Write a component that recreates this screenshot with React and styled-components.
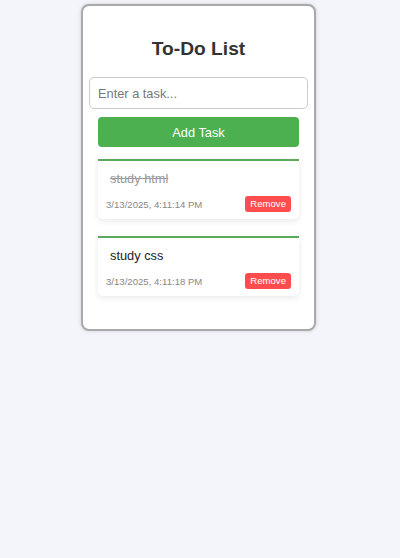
import React, { useState } from 'react';
import styled, { createGlobalStyle } from 'styled-components';

const GlobalStyle = createGlobalStyle`
  html, body {
    margin: 0;
    padding: 0;
    background: #f4f5fb;
    font-family: "Liberation Sans", Arial, sans-serif;
  }
  body {
    min-height: 558px;
  }
`;

const Page = styled.div`
  padding-right: 3px;
`;

const Card = styled.div`
  width: 219px;
  margin: 4px auto 0;
  padding: 16px 6px 33px;
  box-sizing: content-box;
  background: #fff;
  border: 2px solid #a9a9a9;
  border-radius: 8px;
  box-shadow: 0 0 4px rgba(0, 0, 0, 0.15);
  display: flex;
  flex-direction: column;
`;

const Title = styled.h2`
  margin: 16px 0 17px;
  font-size: 19.2px;
  line-height: 22px;
  font-weight: bold;
  color: #333;
  text-align: center;
`;

const TaskInput = styled.input`
  height: 32px;
  box-sizing: border-box;
  padding: 0 8px;
  border: 1px solid #ccc;
  border-radius: 5px;
  font-family: inherit;
  font-size: 12.8px;
  color: #333;
  outline: none;

  &::placeholder {
    color: #777;
  }
`;

const AddButton = styled.button`
  margin: 8px 9px 0;
  height: 30px;
  border: none;
  border-radius: 4px;
  background: #4caf50;
  color: #fff;
  font-family: inherit;
  font-size: 12.8px;
  cursor: pointer;
`;

const List = styled.ul`
  list-style: none;
  margin: 12px 9px 0;
  padding: 0;
  display: flex;
  flex-direction: column;
  gap: 17px;
`;

const Item = styled.li`
  height: 60px;
  box-sizing: border-box;
  padding: 10px 8px 7px;
  background: #fff;
  border-top: 2px solid #5aa95c;
  border-radius: 0 0 5px 5px;
  box-shadow: 0 2px 6px rgba(0, 0, 0, 0.09);
  display: flex;
  flex-direction: column;
  justify-content: space-between;
`;

const TaskText = styled.span`
  padding-left: 4px;
  font-size: 12.8px;
  line-height: 16px;
  color: ${(p) => (p.$done ? '#999' : '#222')};
  text-decoration: ${(p) => (p.$done ? 'line-through' : 'none')};
  cursor: pointer;
`;

const Meta = styled.div`
  display: flex;
  align-items: center;
  justify-content: space-between;
`;

const Stamp = styled.span`
  font-size: 9.6px;
  color: #888;
`;

const RemoveButton = styled.button`
  height: 16px;
  padding: 0 5px;
  border: none;
  border-radius: 3px;
  background: #ff4d4f;
  color: #fff;
  font-family: inherit;
  font-size: 9.6px;
  line-height: 16px;
  cursor: pointer;
`;

export default function App() {
  const [text, setText] = useState('');
  const [tasks, setTasks] = useState([
    { id: 1, text: 'study html', time: '3/13/2025, 4:11:14 PM', done: true },
    { id: 2, text: 'study css', time: '3/13/2025, 4:11:18 PM', done: false },
  ]);

  const addTask = () => {
    if (!text.trim()) return;
    setTasks([
      ...tasks,
      { id: Date.now(), text: text.trim(), time: new Date().toLocaleString('en-US'), done: false },
    ]);
    setText('');
  };

  const toggle = (id) =>
    setTasks(tasks.map((t) => (t.id === id ? { ...t, done: !t.done } : t)));

  const remove = (id) => setTasks(tasks.filter((t) => t.id !== id));

  return (
    <>
      <GlobalStyle />
      <Page>
        <Card>
          <Title>To-Do List</Title>
          <TaskInput
            placeholder="Enter a task..."
            value={text}
            onChange={(e) => setText(e.target.value)}
          />
          <AddButton onClick={addTask}>Add Task</AddButton>
          <List>
            {tasks.map((task) => (
              <Item key={task.id}>
                <TaskText $done={task.done} onClick={() => toggle(task.id)}>
                  {task.text}
                </TaskText>
                <Meta>
                  <Stamp>{task.time}</Stamp>
                  <RemoveButton onClick={() => remove(task.id)}>Remove</RemoveButton>
                </Meta>
              </Item>
            ))}
          </List>
        </Card>
      </Page>
    </>
  );
}
